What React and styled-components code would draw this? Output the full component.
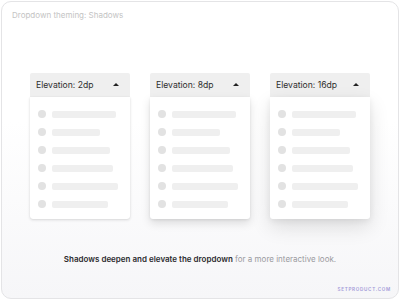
import React from 'react';
import styled, { createGlobalStyle } from 'styled-components';

const GlobalStyle = createGlobalStyle`
  html, body {
    margin: 0;
    padding: 0;
    background: #ffffff;
  }
  body {
    font-family: Inter, "Noto Sans", sans-serif;
  }
`;

const shadows = {
  2: '0 1px 3px rgba(0,0,0,0.14), 0 0 1px rgba(0,0,0,0.10)',
  8: '0 4px 10px rgba(0,0,0,0.13), 0 1px 3px rgba(0,0,0,0.08)',
  16: '0 8px 20px rgba(0,0,0,0.12), 0 2px 6px rgba(0,0,0,0.07)',
};

const Frame = styled.div`
  box-sizing: border-box;
  width: 398px;
  height: 298px;
  margin: 1px;
  border: 1px solid #e4e4e6;
  border-radius: 10px;
  background: linear-gradient(180deg, #ffffff 0%, #ffffff 40%, #f6f6f8 100%);
  display: flex;
  flex-direction: column;
  padding: 7px 0 0;
`;

const Title = styled.div`
  font-size: 8px;
  color: #c4c4c4;
  padding-left: 10px;
  line-height: 12px;
`;

const Row = styled.div`
  display: flex;
  justify-content: center;
  gap: 20px;
  margin-top: 52px;
`;

const Dropdown = styled.div`
  width: 100px;
  display: flex;
  flex-direction: column;
`;

const Header = styled.div`
  height: 24px;
  background: #efefef;
  border-radius: 2px 2px 0 0;
  display: flex;
  align-items: center;
  justify-content: space-between;
  padding: 0 11px 0 6px;
  font-size: 8.6px;
  color: #2e2e2e;
`;

const Caret = styled.span`
  width: 0;
  height: 0;
  border-left: 3px solid transparent;
  border-right: 3px solid transparent;
  border-bottom: 3px solid #222;
  margin-top: -1px;
`;

const Menu = styled.div`
  background: #ffffff;
  border-radius: 0 0 3px 3px;
  padding: 8px 0 6px 8px;
  box-shadow: ${p => shadows[p.$dp]};
`;

const Item = styled.div`
  height: 18px;
  display: flex;
  align-items: center;
  gap: 6px;
`;

const Dot = styled.span`
  width: 8px;
  height: 8px;
  border-radius: 50%;
  background: #e2e2e2;
`;

const Bar = styled.span`
  height: 7px;
  border-radius: 2px;
  background: #efefef;
`;

const Caption = styled.div`
  margin-top: 35px;
  text-align: center;
  font-size: 8px;
  color: #9b9b9f;
`;

const Strong = styled.span`
  color: #2b2b2e;
  font-weight: 600;
`;

const Brand = styled.div`
  margin-top: auto;
  align-self: flex-end;
  margin-right: 7px;
  margin-bottom: 6px;
  font-size: 4.6px;
  font-weight: 600;
  letter-spacing: 0.7px;
  color: #a39bd8;
`;

const widths = [64, 48, 58, 61, 66, 56];

const DropdownCard = ({ dp }) => (
  <Dropdown>
    <Header>
      <span>{`Elevation: ${dp}dp`}</span>
      <Caret />
    </Header>
    <Menu $dp={dp}>
      {widths.map((w, i) => (
        <Item key={i}>
          <Dot />
          <Bar style={{ width: w }} />
        </Item>
      ))}
    </Menu>
  </Dropdown>
);

export default function App() {
  return (
    <>
      <GlobalStyle />
      <Frame>
        <Title>Dropdown theming: Shadows</Title>
        <Row>
          <DropdownCard dp={2} />
          <DropdownCard dp={8} />
          <DropdownCard dp={16} />
        </Row>
        <Caption>
          <Strong>Shadows deepen and elevate the dropdown</Strong> for a more interactive look.
        </Caption>
        <Brand>SETPRODUCT.COM</Brand>
      </Frame>
    </>
  );
}
